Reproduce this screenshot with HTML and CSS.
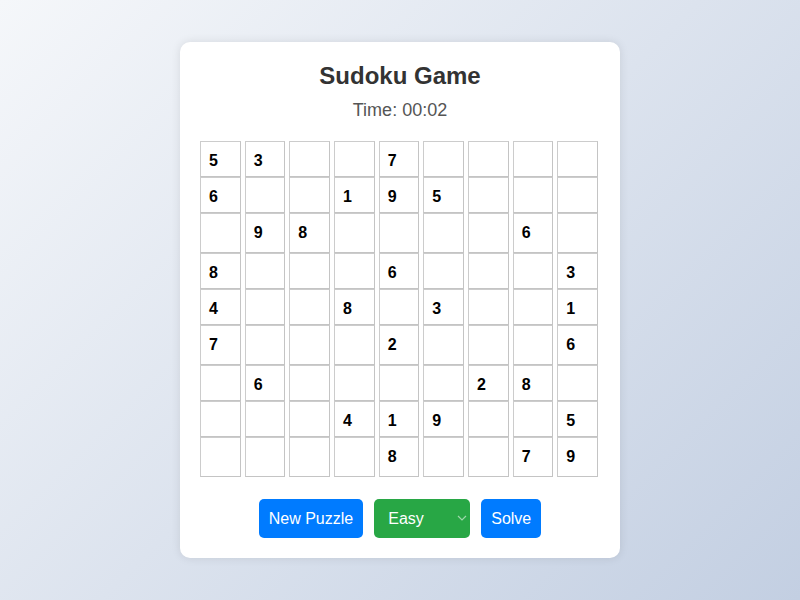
FILE: index.html
```html
<!DOCTYPE html>
<html lang="en">
<head>
    <meta charset="UTF-8">
    <meta name="viewport" content="width=device-width, initial-scale=1.0">
    <title>Sudoku Game</title>
    <link rel="stylesheet" href="styles.css">
</head>
<body>
    <div class="game_card">
        <h1 class="game_title">Sudoku Game</h1>
        <div class="game_timer">Time: <span id="timer">00:02</span></div>
        <div id="board" class="board"></div>
        <div class="controls">
            <button class="btn btn_blue">New Puzzle</button>
            <div class="select_wrap">
                <select class="level_select">
                    <option>Easy</option>
                    <option>Medium</option>
                    <option>Hard</option>
                </select>
                <svg class="select_arrow" width="10" height="6" viewBox="0 0 10 6">
                    <path d="M1 1 L5 5 L9 1" fill="none" stroke="currentColor" stroke-width="1.2"/>
                </svg>
            </div>
            <button class="btn btn_blue">Solve</button>
        </div>
    </div>
    <script>
        // 0 = empty
        var puzzle = [
            [5,3,0,0,7,0,0,0,0],
            [6,0,0,1,9,5,0,0,0],
            [0,9,8,0,0,0,0,6,0],
            [8,0,0,0,6,0,0,0,3],
            [4,0,0,8,0,3,0,0,1],
            [7,0,0,0,2,0,0,0,6],
            [0,6,0,0,0,0,2,8,0],
            [0,0,0,4,1,9,0,0,5],
            [0,0,0,0,8,0,0,7,9]
        ];
        var cellTmp = '<div class="cell{cls}">{text}</div>';
        var html = '';
        puzzle.forEach(function (row, r) {
            row.forEach(function (val) {
                var cls = r % 3 === 2 ? ' box_end' : '';
                html += cellTmp.replace('{cls}', cls).replace('{text}', val ? val : '');
            });
        });
        document.getElementById('board').innerHTML = html;
    </script>
</body>
</html>
```

FILE: styles.css
```css
html,body{
    margin:0;
    padding:0;
    height:100%;
}
body{
    display:flex;
    align-items:center;
    justify-content:center;
    font-family:"Liberation Sans", Arial, sans-serif;
    background:linear-gradient(135deg, #f5f7fa 0%, #c3cfe2 100%);
}
.game_card{
    box-sizing:border-box;
    width:440px;
    padding:20px;
    background:#fff;
    border-radius:10px;
    box-shadow:0 0 10px rgba(0, 0, 0, 0.1);
    text-align:center;
}
.game_title{
    margin:0 0 10px;
    font-size:24px;
    line-height:28px;
    color:#333;
}
.game_timer{
    margin-bottom:20px;
    font-size:18px;
    line-height:21px;
    color:#555;
}
.board{
    display:grid;
    width:398px;
    grid-template-columns:repeat(9, 1fr);
    grid-template-rows:repeat(3, 36px 36px 40px);
    column-gap:4px;
}
.cell{
    display:flex;
    align-items:center;
    box-sizing:border-box;
    padding:3px 0 0 8px;
    border:1px solid #ccc;
    border-right-color:#c4c4c4;
    border-bottom-color:#c4c4c4;
    font-size:16px;
    font-weight:bold;
    color:#000;
    background:#fff;
}
.cell.box_end{
    padding-bottom:4px;
}
.controls{
    display:flex;
    justify-content:center;
    gap:11px;
    margin-top:22px;
}
.btn{
    height:39px;
    padding:0 10px;
    border:none;
    border-radius:5px;
    font-family:"Liberation Sans", Arial, sans-serif;
    font-size:16px;
    color:#fff;
    cursor:pointer;
}
.btn_blue{
    background:#007bff;
}
/* 下拉框 */
.select_wrap{
    position:relative;
    display:flex;
}
.level_select{
    box-sizing:border-box;
    width:96px;
    height:39px;
    padding:0 8px 0 14px;
    border:none;
    border-radius:5px;
    font-family:"Liberation Sans", Arial, sans-serif;
    font-size:16px;
    color:#fff;
    background-color:#28a745;
    appearance:none;
    -webkit-appearance:none;
    cursor:pointer;
}
.select_arrow{
    position:absolute;
    right:3px;
    top:16px;
    color:rgba(255, 255, 255, 0.55);
    pointer-events:none;
}
```
